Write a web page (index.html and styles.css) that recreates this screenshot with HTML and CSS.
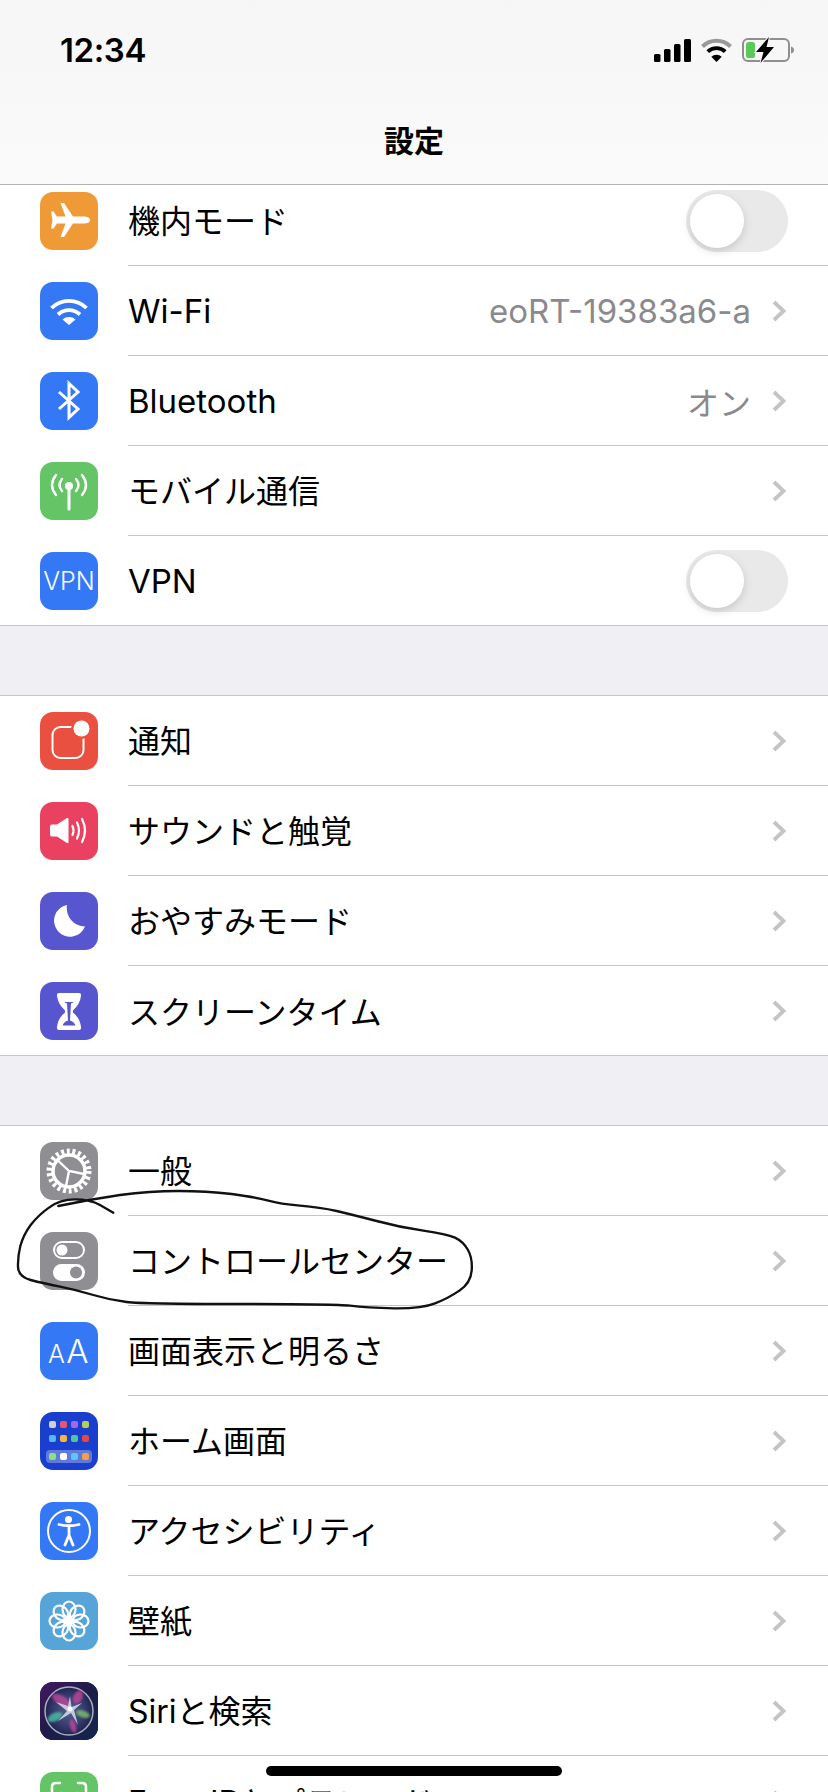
FILE: index.html
```html
<!DOCTYPE html>
<html lang="ja">
<head>
  <meta charset="UTF-8" />
  <meta name="viewport" content="width=device-width, initial-scale=1.0">
  <title>設定</title>
  <link rel="stylesheet" href="styles.css">
</head>
<body>
  <svg width="0" height="0" class="defs">
    <defs>
      <symbol id="chevron" viewBox="0 0 14 22">
        <path d="M2 2l9.500 9L2 20" fill="none" stroke="currentColor" stroke-width="3.800"/>
      </symbol>
      <radialGradient id="siriBall" cx="50%" cy="50%" r="50%">
        <stop offset="0" stop-color="#56628f"/>
        <stop offset="0.7" stop-color="#33386a"/>
        <stop offset="1" stop-color="#1e2350"/>
      </radialGradient>
      <linearGradient id="siriBack" x1="0" y1="0" x2="1" y2="1">
        <stop offset="0" stop-color="#43195f"/>
        <stop offset="0.5" stop-color="#1d1b48"/>
        <stop offset="1" stop-color="#14264f"/>
      </linearGradient>
      <filter id="soft"><feGaussianBlur stdDeviation="1.200"/></filter>
      <filter id="softer"><feGaussianBlur stdDeviation="0.500"/></filter>
    </defs>
  </svg>

  <header class="nav">
    <div class="status">
      <span class="time">12:34</span>
      <div class="status-icons">
        <svg width="37" height="23" viewBox="0 0 37 23">
          <rect x="0" y="15" width="6.500" height="8" rx="1.500"/>
          <rect x="10" y="10" width="6.500" height="13" rx="1.500"/>
          <rect x="20" y="5" width="6.500" height="18" rx="1.500"/>
          <rect x="30" y="0" width="7" height="23" rx="1.500"/>
        </svg>
        <svg width="31" height="24" viewBox="0 0 31 24">
          <path d="M1.500 8.500a20 20 0 0 1 28 0" fill="none" stroke="#999" stroke-width="4"/>
          <path d="M6.800 13.600a12.400 12.400 0 0 1 17.400 0" fill="none" stroke="#000" stroke-width="3.800"/>
          <path d="M15.500 24l-5.200-5.200a7.400 7.400 0 0 1 10.400 0z"/>
        </svg>
        <svg width="52" height="26" viewBox="0 0 52 26">
          <rect x="1" y="2" width="46" height="22" rx="5" fill="none" stroke="#8f8f8f" stroke-width="2"/>
          <path d="M49 9.500q3 1 3 3.500t-3 3.500z" fill="#8f8f8f"/>
          <rect x="4" y="5" width="9" height="16" rx="2.500" fill="#5ac85a"/>
          <path class="bolt" d="M27 0L14 15h7.500L18.500 26 32 10h-7.500z"/>
        </svg>
      </div>
    </div>
    <h1 class="title">設定</h1>
  </header>

  <main class="list">
    <section class="group">
      <div class="row">
        <span class="icon orange">
          <svg viewBox="0 0 58 58"><path d="M45 24.500H33L24 11h-3.500l5 13.500H17l-3.500-5H11l1.500 8.500L11 36.500h2.500l3.500-5h8.500L20.500 45H24l9-13.500h12q5-.5 5-3.500t-5-3.500z" fill="#fff"/></svg>
        </span>
        <div class="row-body"><span class="label">機内モード</span><span class="switch"><i class="knob"></i></span></div>
      </div>
      <div class="row">
        <span class="icon blue">
          <svg viewBox="0 0 58 58"><g fill="none" stroke="#fff" stroke-width="3.800"><path d="M11.500 26a25 25 0 0 1 35 0"/><path d="M18 32.500a16 16 0 0 1 22 0"/></g><path d="M29 43l-6.500-5.500a10 10 0 0 1 13 0z" fill="#fff"/></svg>
        </span>
        <div class="row-body"><span class="label latin">Wi-Fi</span><span class="value latin">eoRT-19383a6-a</span><svg class="chevron"><use href="#chevron"/></svg></div>
      </div>
      <div class="row">
        <span class="icon blue">
          <svg viewBox="0 0 58 58"><path d="M19 20l19 17-9 8.500V11.500l9 8.500-19 17" fill="none" stroke="#fff" stroke-width="3"/></svg>
        </span>
        <div class="row-body"><span class="label latin">Bluetooth</span><span class="value">オン</span><svg class="chevron"><use href="#chevron"/></svg></div>
      </div>
      <div class="row">
        <span class="icon green">
          <svg viewBox="0 0 58 58"><g fill="none" stroke="#fff" stroke-width="2.400" stroke-linecap="round"><path d="M16 13q-8 10 0 20M22 17q-5 6 0 12M42 13q8 10 0 20M36 17q5 6 0 12"/><path d="M29 24v23" stroke-width="3"/></g><circle cx="29" cy="24" r="4" fill="#fff"/></svg>
        </span>
        <div class="row-body"><span class="label">モバイル通信</span><svg class="chevron"><use href="#chevron"/></svg></div>
      </div>
      <div class="row">
        <span class="icon blue"><span class="icon-text">VPN</span></span>
        <div class="row-body"><span class="label latin">VPN</span><span class="switch"><i class="knob"></i></span></div>
      </div>
    </section>

    <section class="group">
      <div class="row">
        <span class="icon red">
          <svg viewBox="0 0 58 58"><rect x="12.500" y="15" width="31" height="31" rx="8" fill="none" stroke="#fff" stroke-width="2"/><circle cx="41.500" cy="16.500" r="10.500" fill="#e9503f"/><circle cx="41.500" cy="16.500" r="8" fill="#fff"/></svg>
        </span>
        <div class="row-body"><span class="label">通知</span><svg class="chevron"><use href="#chevron"/></svg></div>
      </div>
      <div class="row">
        <span class="icon pink">
          <svg viewBox="0 0 58 58"><path d="M12 22.500h5L27 16q1.500-.5 1.500 1v23q0 1.500-1.500 1l-10-6.500h-5q-2 0-2-2v-8q0-2 2-2z" fill="#fff"/><g fill="none" stroke="#fff" stroke-width="2.200" stroke-linecap="round"><path d="M32.500 24q2 4.500 0 9"/><path d="M37 20.500q4 8 0 16"/><path d="M42 17q6 11.500 0 23"/></g></svg>
        </span>
        <div class="row-body"><span class="label">サウンドと触覚</span><svg class="chevron"><use href="#chevron"/></svg></div>
      </div>
      <div class="row">
        <span class="icon purple">
          <svg viewBox="0 0 58 58"><path d="M27 13A16 16 0 1 0 45 34.500 18.500 18.500 0 0 1 27 13z" fill="#fff"/></svg>
        </span>
        <div class="row-body"><span class="label">おやすみモード</span><svg class="chevron"><use href="#chevron"/></svg></div>
      </div>
      <div class="row">
        <span class="icon purple">
          <svg viewBox="0 0 58 58"><path d="M19 11h20q2.500 0 2 3-1 8-8 14.500v2q7 5.500 8 14.500.5 3-2 3H19q-2.500 0-2-3 1-9 8-14.500v-2Q18 22 17 14q-.5-3 2-3z" fill="#fff"/><path d="M24 20h10l-3 1.500-1 17q4 1 5.500 5h-13q1.500-4 5.500-5l-1-17z" fill="#5856cf"/></svg>
        </span>
        <div class="row-body"><span class="label">スクリーンタイム</span><svg class="chevron"><use href="#chevron"/></svg></div>
      </div>
    </section>

    <section class="group">
      <div class="row">
        <span class="icon gray">
          <svg viewBox="0 0 58 58"><g fill="none" stroke="#fff"><circle cx="29" cy="29" r="19.500" stroke-width="6" stroke-dasharray="2.900 2.670"/><circle cx="29" cy="29" r="16" stroke-width="3.500"/><path d="M18 18.500L29 29l15 3M29 29l-3 15" stroke-width="2.400"/></g></svg>
        </span>
        <div class="row-body"><span class="label">一般</span><svg class="chevron"><use href="#chevron"/></svg></div>
      </div>
      <div class="row">
        <span class="icon gray">
          <svg viewBox="0 0 58 58"><rect x="14" y="10" width="30" height="16" rx="8" fill="none" stroke="#fff" stroke-width="2"/><circle cx="22" cy="18" r="5.500" fill="#fff"/><rect x="13" y="32" width="32" height="17" rx="8.500" fill="#fff"/><circle cx="36" cy="40.500" r="6" fill="#8e8e93"/></svg>
        </span>
        <div class="row-body"><span class="label">コントロールセンター</span><svg class="chevron"><use href="#chevron"/></svg></div>
      </div>
      <div class="row">
        <span class="icon blue"><span class="icon-aa"><small>A</small>A</span></span>
        <div class="row-body"><span class="label">画面表示と明るさ</span><svg class="chevron"><use href="#chevron"/></svg></div>
      </div>
      <div class="row">
        <span class="icon home">
          <svg viewBox="0 0 58 58">
            <rect x="6" y="38" width="46" height="13" rx="4" fill="#fff" opacity="0.3"/>
            <rect x="9" y="9" width="7" height="7" rx="2" fill="#d0d0d0"/><rect x="20" y="9" width="7" height="7" rx="2" fill="#e9566c"/><rect x="31" y="9" width="7" height="7" rx="2" fill="#a566e8"/><rect x="42" y="9" width="7" height="7" rx="2" fill="#b5cf5c"/>
            <rect x="9" y="23" width="7" height="7" rx="2" fill="#55b8f5"/><rect x="20" y="23" width="7" height="7" rx="2" fill="#f3b93e"/><rect x="31" y="23" width="7" height="7" rx="2" fill="#50c79b"/><rect x="42" y="23" width="7" height="7" rx="2" fill="#e04a3f"/>
            <rect x="9" y="41" width="7" height="7" rx="2" fill="#8fe07a"/><rect x="20" y="41" width="7" height="7" rx="2" fill="#fff"/><rect x="31" y="41" width="7" height="7" rx="2" fill="#5ac8fa"/><rect x="42" y="41" width="7" height="7" rx="2" fill="#f3a04a"/>
          </svg>
        </span>
        <div class="row-body"><span class="label">ホーム画面</span><svg class="chevron"><use href="#chevron"/></svg></div>
      </div>
      <div class="row">
        <span class="icon blue">
          <svg viewBox="0 0 58 58"><circle cx="29" cy="29" r="21" fill="none" stroke="#fff" stroke-width="2"/><circle cx="28.500" cy="17.500" r="3.500" fill="#fff"/><path d="M19 22.500q10 2.500 20 0M29 24v9M29 33l-4 10M29 33l4 10" fill="none" stroke="#fff" stroke-width="2.800" stroke-linecap="round"/></svg>
        </span>
        <div class="row-body"><span class="label">アクセシビリティ</span><svg class="chevron"><use href="#chevron"/></svg></div>
      </div>
      <div class="row">
        <span class="icon sky">
          <svg viewBox="0 0 58 58"><g fill="none" stroke="#fff" stroke-width="2.200"><ellipse cx="29" cy="17.500" rx="6.500" ry="8"/><ellipse cx="29" cy="17.500" rx="6.500" ry="8" transform="rotate(45 29 29)"/><ellipse cx="29" cy="17.500" rx="6.500" ry="8" transform="rotate(90 29 29)"/><ellipse cx="29" cy="17.500" rx="6.500" ry="8" transform="rotate(135 29 29)"/><ellipse cx="29" cy="17.500" rx="6.500" ry="8" transform="rotate(180 29 29)"/><ellipse cx="29" cy="17.500" rx="6.500" ry="8" transform="rotate(225 29 29)"/><ellipse cx="29" cy="17.500" rx="6.500" ry="8" transform="rotate(270 29 29)"/><ellipse cx="29" cy="17.500" rx="6.500" ry="8" transform="rotate(315 29 29)"/></g><circle cx="29" cy="29" r="3.500" fill="#fff"/></svg>
        </span>
        <div class="row-body"><span class="label">壁紙</span><svg class="chevron"><use href="#chevron"/></svg></div>
      </div>
      <div class="row">
        <span class="icon siri">
          <svg viewBox="0 0 58 58">
            <rect width="58" height="58" fill="url(#siriBack)"/>
            <circle cx="29" cy="29" r="24" fill="url(#siriBall)" stroke="#a9adc0" stroke-width="1.500"/>
            <g filter="url(#soft)" opacity="0.8">
              <ellipse cx="21" cy="18" rx="10" ry="4.500" fill="#c2479b" transform="rotate(30 21 18)"/>
              <ellipse cx="38" cy="15" rx="4.500" ry="7" fill="#c2479b" transform="rotate(25 38 15)"/>
              <ellipse cx="15" cy="35" rx="8" ry="4" fill="#49c2a8" transform="rotate(-25 15 35)"/>
              <ellipse cx="43" cy="32" rx="7" ry="3.500" fill="#7fc06a" transform="rotate(20 43 32)"/>
              <ellipse cx="33" cy="44" rx="3" ry="7" fill="#c2479b" transform="rotate(-15 33 44)"/>
            </g>
            <path d="M30 14l1.500 11L42 21l-8 7 4 15-7-12-13 8 9-10-11-9 12 4z" fill="#dfe6f2" opacity="0.8" filter="url(#softer)"/>
            <circle cx="30" cy="27" r="2.500" fill="#fff" filter="url(#softer)"/>
          </svg>
        </span>
        <div class="row-body"><span class="label latin-mix">Siriと検索</span><svg class="chevron"><use href="#chevron"/></svg></div>
      </div>
      <div class="row">
        <span class="icon green">
          <svg viewBox="0 0 58 58"><path d="M12 19v-4q0-4 4-4h4M38 11h4q4 0 4 4v4M12 39v4q0 4 4 4h4M38 47h4q4 0 4-4v-4" fill="none" stroke="#fff" stroke-width="2.600" stroke-linecap="round"/><path d="M21 21v4M37 21v4" stroke="#fff" stroke-width="2.600" stroke-linecap="round"/></svg>
        </span>
        <div class="row-body"><span class="label latin-mix">Face IDとパスコード</span><svg class="chevron"><use href="#chevron"/></svg></div>
      </div>
    </section>
  </main>

  <!-- pen mark drawn over the screenshot -->
  <svg class="scribble" width="500" height="220" viewBox="0 0 1500 660">
    <path d="M340 278L300 255Q270 238 225 238Q180 238 148 262Q115 285 92 315Q70 345 61 378Q53 410 54 440Q55 470 92 480Q130 490 180 500Q230 510 280 525Q330 540 380 546Q430 552 715 552Q1000 552 1050 557Q1100 563 1182 565Q1265 566 1305 550Q1345 535 1378 512Q1412 490 1415 452Q1418 415 1404 390Q1390 365 1365 353Q1340 342 1270 332Q1200 322 1130 303Q1060 285 1010 273Q960 262 900 257Q840 252 805 242Q770 232 695 222Q620 213 535 213Q450 213 360 225Q270 238 175 258" fill="none" stroke="#111" stroke-width="7" stroke-linecap="round"/>
  </svg>

  <div class="home-bar"></div>
</body>
</html>
```

FILE: styles.css
```css
* {
  box-sizing: border-box;
}

body {
  margin: 0;
  width: 828px;
  height: 1792px;
  position: relative;
  overflow: hidden;
  background: #efeff4;
  color: #000;
  font-family: Inter, "Noto Sans CJK JP", sans-serif;
}

.defs {
  position: absolute;
}

.nav {
  position: relative;
  z-index: 1;
  height: 185px;
  background: linear-gradient(180deg, #f6f6f7, #fafafb);
  border-bottom: 1px solid #b2b2b2;
}

.status {
  height: 100px;
  display: flex;
  align-items: center;
  justify-content: space-between;
  padding: 0 34px 0 60px;
}

.time {
  font-size: 33px;
  font-weight: 600;
  letter-spacing: -0.4px;
}

.status-icons {
  display: flex;
  align-items: center;
  gap: 10px;
}

.bolt {
  stroke: #f7f7f8;
  stroke-width: 2;
  paint-order: stroke;
}

.title {
  margin: 0;
  text-align: center;
  font-size: 30px;
  font-weight: 700;
  line-height: 82px;
}

.list {
  margin-top: -9px;
}

.group {
  background: #fff;
}

.group + .group {
  margin-top: 69px;
  border-top: 1px solid #c6c6c8;
}

.row {
  height: 90px;
  display: flex;
  align-items: center;
  padding-left: 40px;
}

.row:last-child {
  box-shadow: inset 0 -1px 0 #c6c6c8;
}

.row-body {
  flex: 1;
  align-self: stretch;
  margin-left: 30px;
  padding-right: 42px;
  display: flex;
  align-items: center;
  border-bottom: 1px solid #c6c6c8;
}

.row:last-child .row-body {
  border-bottom: 0;
}

.label {
  flex: 1;
  font-size: 32px;
  padding-bottom: 3px;
}

.label.latin {
  font-size: 33px;
  padding-bottom: 0;
}

.value {
  font-size: 32px;
  color: #8a8a8e;
  margin-right: 21px;
}

.value.latin {
  font-size: 33px;
}

.chevron {
  width: 14px;
  height: 22px;
  color: #c4c4c7;
}

.icon {
  flex: none;
  width: 58px;
  height: 58px;
  border-radius: 13px;
  overflow: hidden;
  display: flex;
  align-items: center;
  justify-content: center;
  color: #fff;
}

.icon svg {
  width: 58px;
  height: 58px;
  display: block;
}

.icon-text {
  font-size: 25px;
  font-weight: 300;
}

.icon-aa {
  font-size: 33px;
  font-weight: 300;
  letter-spacing: 1.5px;
}

.icon-aa small {
  font-size: 25px;
}

.orange { background: #f09a37; }
.blue { background: #3478f6; }
.green { background: #65c466; }
.red { background: #e9503f; }
.pink { background: #e9415f; }
.purple { background: #5856cf; }
.gray { background: #8e8e93; }
.sky { background: #56a4d8; }
.home { background: #1a3fcf; }
.siri { background: #1d1b48; }

.switch {
  flex: none;
  width: 102px;
  height: 62px;
  margin-right: -2px;
  padding: 0 4px;
  border-radius: 31px;
  background: #e9e9ea;
  display: flex;
  align-items: center;
}

.knob {
  width: 54px;
  height: 54px;
  border-radius: 50%;
  background: #fff;
  box-shadow: 0 3px 8px rgba(0, 0, 0, 0.15);
}

.scribble {
  position: absolute;
  left: 0;
  top: 1120px;
}

.home-bar {
  position: absolute;
  left: 266px;
  top: 1766px;
  width: 296px;
  height: 10px;
  border-radius: 5px;
  background: #000;
}
```
